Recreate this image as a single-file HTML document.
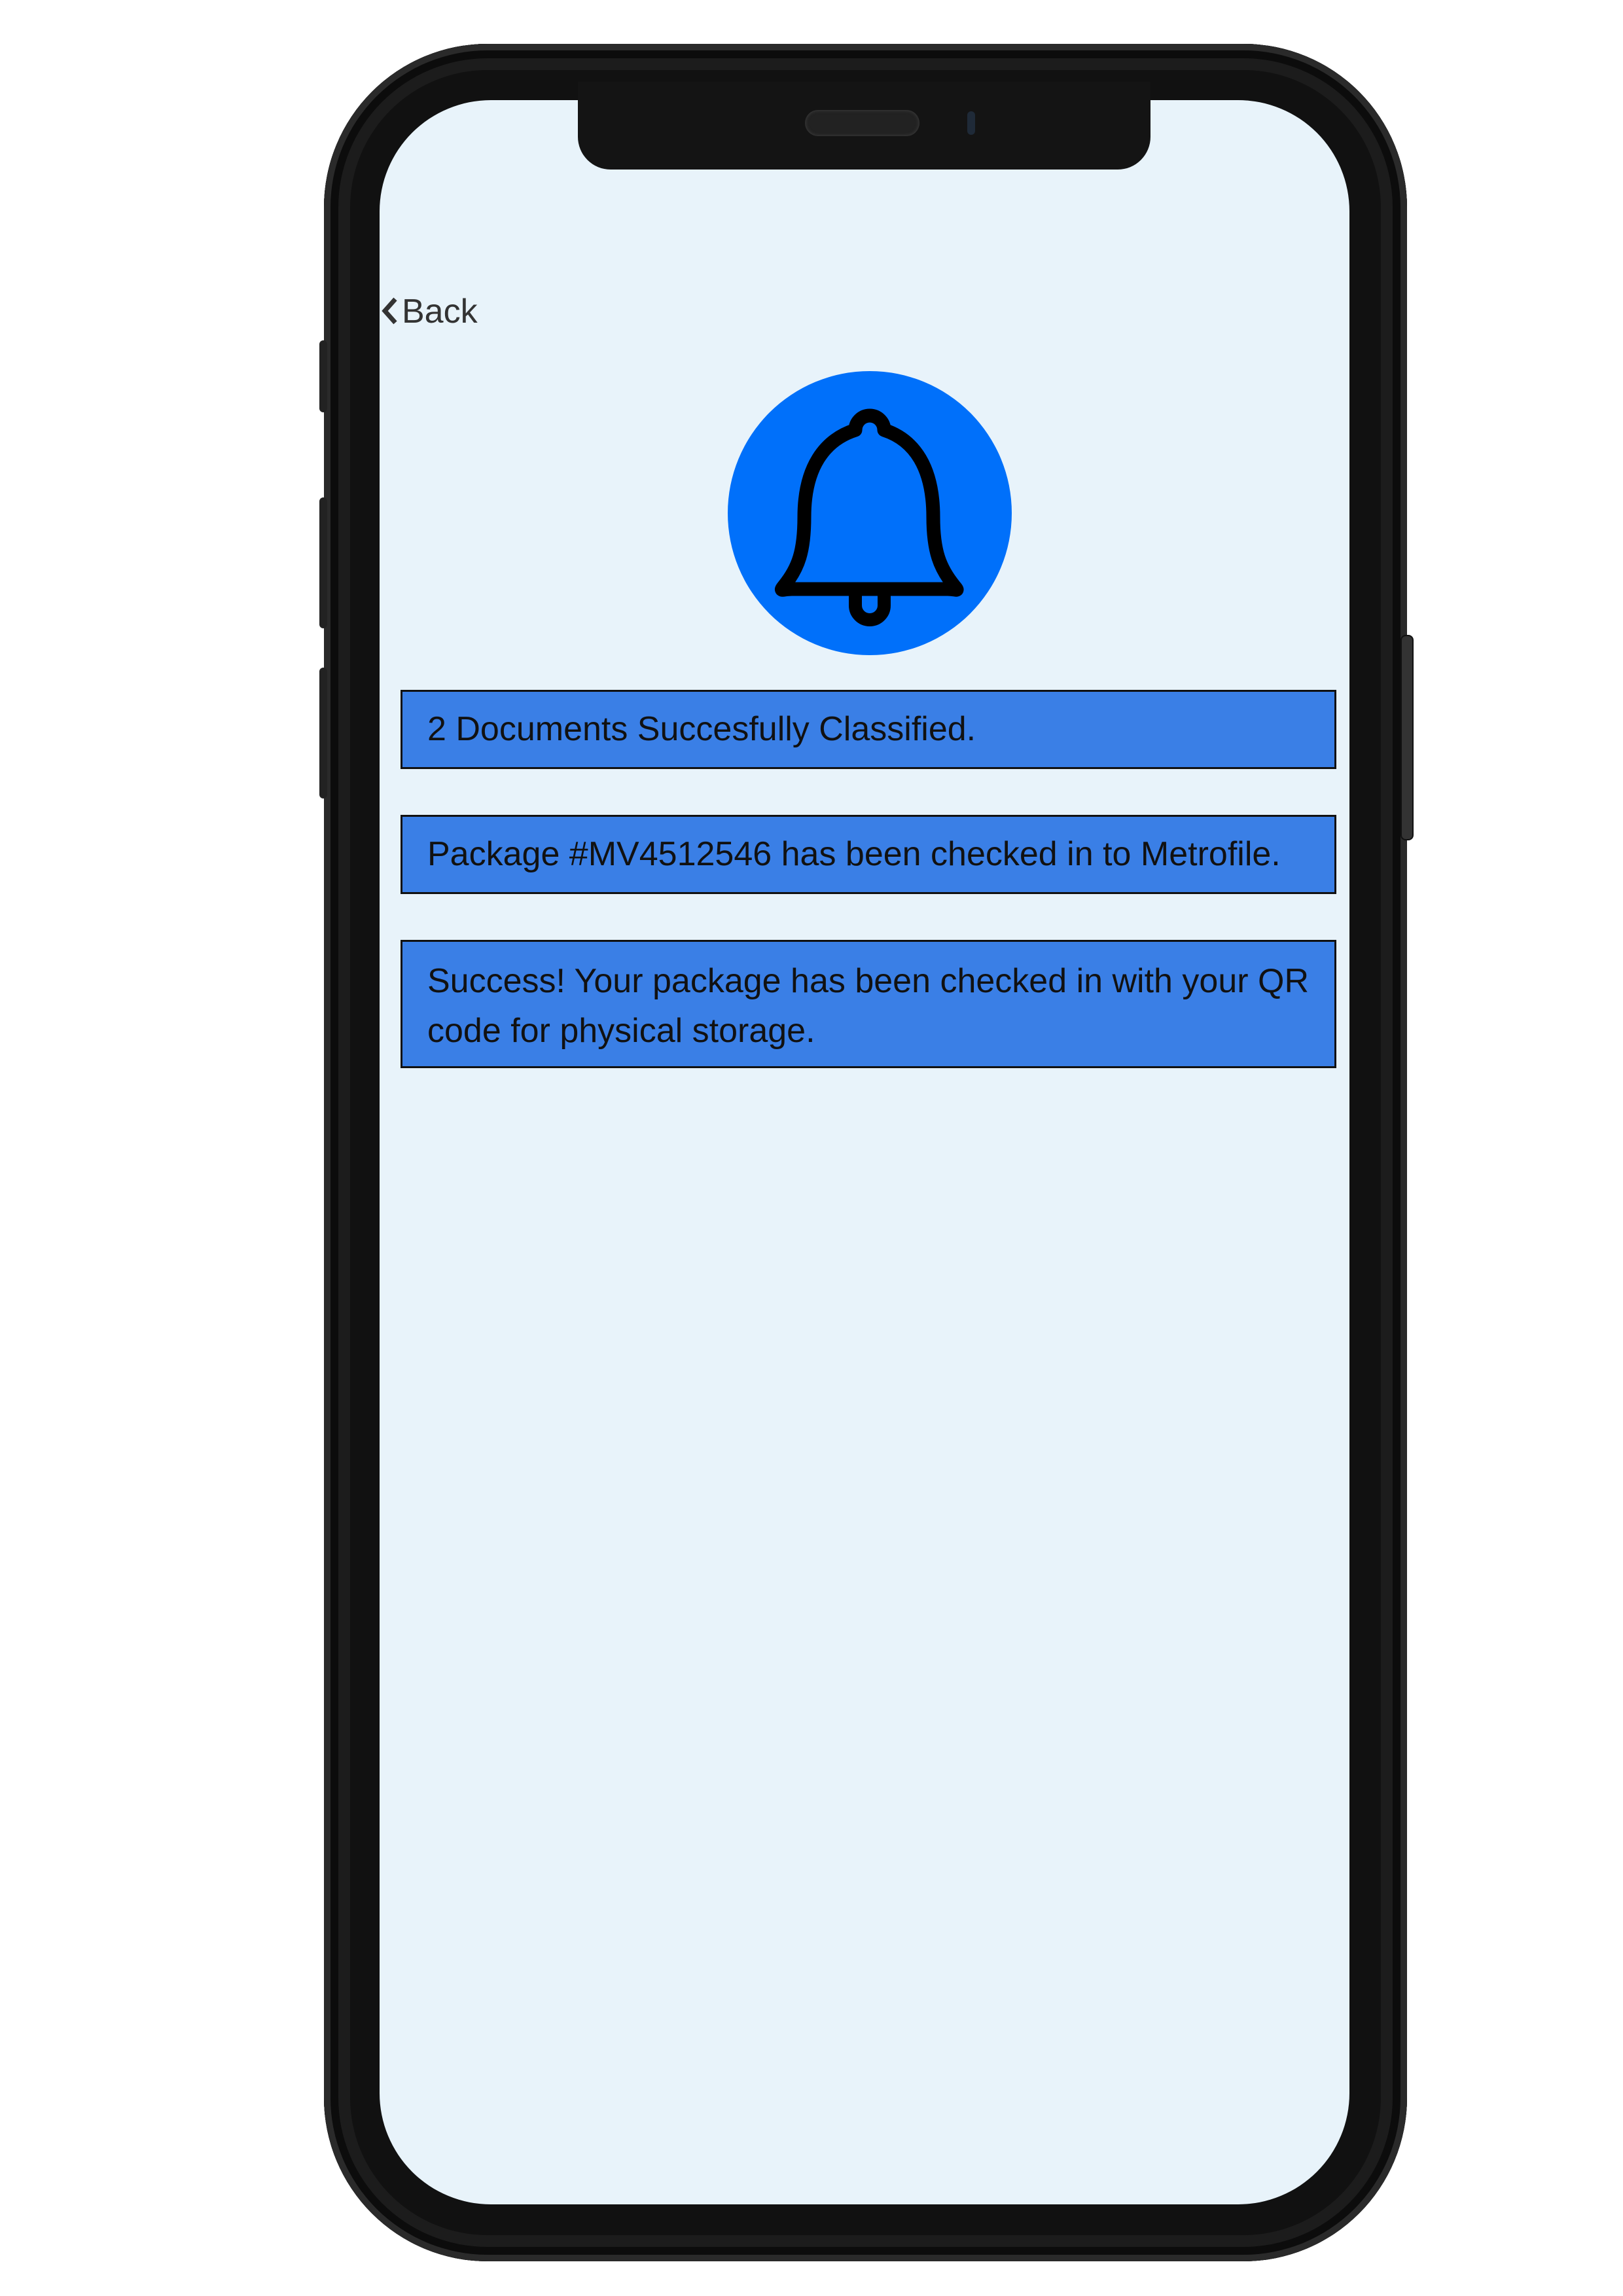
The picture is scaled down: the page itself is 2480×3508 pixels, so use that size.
<!DOCTYPE html>
<html><head><meta charset="utf-8"><style>
html,body{margin:0;padding:0;background:#fff;}
body{width:2480px;height:3508px;position:relative;overflow:hidden;font-family:"Liberation Sans",sans-serif;}
.frame{position:absolute;left:495px;top:67px;width:1655px;height:3388px;background:#111;border-radius:250px;box-shadow:inset 0 0 0 10px #2a2a2a, inset 0 0 0 22px #0c0c0c, inset 0 0 0 40px #1c1c1c;}
.btn{position:absolute;left:2140px;top:970px;width:16px;height:310px;background:#333;border-radius:8px;border:2px solid #111;}
.btnl{position:absolute;left:488px;width:12px;background:#222;border-radius:6px;}
.screen{position:absolute;left:580px;top:153px;width:1482px;height:3215px;background:#e8f3fa;border-radius:170px;overflow:hidden;}
.notch{position:absolute;left:883px;top:125px;width:875px;height:134px;background:#141414;border-radius:0 0 50px 50px;}
.spk{position:absolute;left:1230px;top:168px;width:175px;height:40px;background:#222;border-radius:20px;box-shadow:inset 0 0 6px #444;}
.cam{position:absolute;left:1478px;top:170px;width:12px;height:36px;background:#1f2a38;border-radius:6px;}
.back{position:absolute;left:580px;top:446px;font-size:52px;color:#333;}
.circle{position:absolute;left:1112px;top:567px;width:434px;height:434px;border-radius:50%;background:#0070fa;}
.box{position:absolute;left:612px;width:1430px;background:#3a7fe6;border:3px solid #111;box-sizing:border-box;font-size:52px;color:#111;padding-left:38px;white-space:nowrap;}
</style></head><body>
<div class="frame"></div>
<div class="btn"></div>
<div class="btnl" style="top:520px;height:110px"></div>
<div class="btnl" style="top:760px;height:200px"></div>
<div class="btnl" style="top:1020px;height:200px"></div>
<div class="screen"></div>
<div class="notch"></div>
<div class="spk"></div>
<div class="cam"></div>
<div class="back"><svg width="30" height="48" viewBox="0 0 30 48" style="vertical-align:-6px;margin-right:4px"><path d="M24 6 L8 24 L24 42" fill="none" stroke="#333" stroke-width="7"/></svg>Back</div>
<div class="circle"></div>
<svg style="position:absolute;left:0;top:0" width="2480" height="1100" viewBox="0 0 2480 1100">
<path d="M1307 657 C1260 672 1229 714 1229 790 C1229 842 1220 868 1198 895 C1190 905 1196 900 1210 900 L1448 900 C1462 900 1466 905 1458 895 C1436 868 1426 842 1426 790 C1426 714 1397 672 1351 657 A22 22 0 1 0 1307 657 Z" fill="#0070fa" stroke="#000" stroke-width="21" stroke-linejoin="round"/>
<path d="M1307 905 L1307 925 A22 22 0 0 0 1351 925 L1351 905" fill="none" stroke="#000" stroke-width="20"/>
</svg>
<div class="box" style="top:1054px;height:121px;line-height:115px;">2 Documents Succesfully Classified.</div>
<div class="box" style="top:1245px;height:121px;line-height:115px;">Package #MV4512546 has been checked in to Metrofile.</div>
<div class="box" style="top:1436px;height:196px;padding-top:22px;line-height:76px;">Success! Your package has been checked in with your QR<br>code for physical storage.</div>
</body></html>
